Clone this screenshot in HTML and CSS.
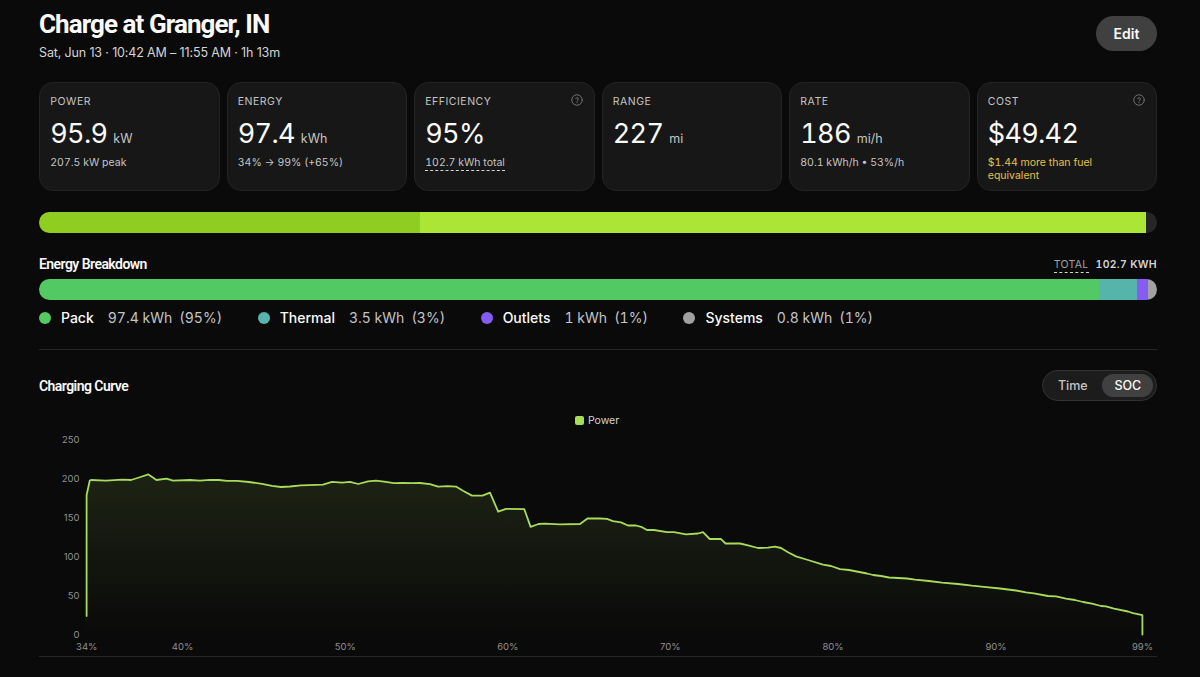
FILE: index.html
```html
<!DOCTYPE html>
<html lang="en">

<head>
    <meta charset="UTF-8">
    <meta name="viewport" content="width=device-width, initial-scale=1.0">
    <title>Charge at Granger, IN</title>
    <link rel="stylesheet" href="styles.css">
</head>

<body>
    <div class="page">
        <header class="header">
            <div>
                <h1>Charge at Granger, IN</h1>
                <p class="subtitle">Sat, Jun 13 · 10:42 AM – 11:55 AM · 1h 13m</p>
            </div>
            <button class="edit-button">Edit</button>
        </header>

        <!-- Stat cards -->
        <div class="cards">
            <div class="card">
                <div class="label">Power</div>
                <div class="value"><span>95.9</span><span class="unit">kW</span></div>
                <div class="note">207.5 kW peak</div>
            </div>
            <div class="card">
                <div class="label">Energy</div>
                <div class="value"><span>97.4</span><span class="unit">kWh</span></div>
                <div class="note">34% → 99% (+65%)</div>
            </div>
            <div class="card">
                <div class="label">Efficiency</div>
                <svg class="help" viewBox="0 0 24 24">
                    <circle cx="12" cy="12" r="10.5" />
                    <path d="M9.3 9.2a2.8 2.8 0 0 1 5.4 .9c0 1.8-2.7 2.3-2.7 3.9M12 17v.4" />
                </svg>
                <div class="value"><span>95%</span></div>
                <div class="note"><span class="dashed">102.7 kWh total</span></div>
            </div>
            <div class="card">
                <div class="label">Range</div>
                <div class="value"><span>227</span><span class="unit">mi</span></div>
            </div>
            <div class="card">
                <div class="label">Rate</div>
                <div class="value"><span>186</span><span class="unit">mi/h</span></div>
                <div class="note">80.1 kWh/h • 53%/h</div>
            </div>
            <div class="card">
                <div class="label">Cost</div>
                <svg class="help" viewBox="0 0 24 24">
                    <circle cx="12" cy="12" r="10.5" />
                    <path d="M9.3 9.2a2.8 2.8 0 0 1 5.4 .9c0 1.8-2.7 2.3-2.7 3.9M12 17v.4" />
                </svg>
                <div class="value"><span>$49.42</span></div>
                <div class="note warn">$1.44 more than fuel equivalent</div>
            </div>
        </div>

        <!-- State of charge, before and after -->
        <div class="bar soc-bar">
            <div class="soc-start" style="width: 34.1%"></div>
            <div class="soc-added" style="width: 64.9%"></div>
        </div>

        <section class="breakdown">
            <div class="section-head">
                <h2>Energy Breakdown</h2>
                <div class="total"><span class="total-label">Total</span><b>102.7 kWh</b></div>
            </div>
            <div class="bar">
                <div class="pack" style="width: 94.84%"></div>
                <div class="thermal" style="width: 3.41%"></div>
                <div class="outlets" style="width: 0.97%"></div>
                <div class="systems" style="width: 0.78%"></div>
            </div>
            <div class="legend">
                <div class="item"><i class="dot pack"></i><b>Pack</b><span>97.4 kWh</span><span>(95%)</span></div>
                <div class="item"><i class="dot thermal"></i><b>Thermal</b><span>3.5 kWh</span><span>(3%)</span></div>
                <div class="item"><i class="dot outlets"></i><b>Outlets</b><span>1 kWh</span><span>(1%)</span></div>
                <div class="item"><i class="dot systems"></i><b>Systems</b><span>0.8 kWh</span><span>(1%)</span></div>
            </div>
        </section>

        <section class="curve">
            <div class="curve-head">
                <h2>Charging Curve</h2>
                <div class="toggle">
                    <button>Time</button>
                    <button class="active">SOC</button>
                </div>
            </div>
            <div class="chart-legend"><i></i>Power</div>
            <svg class="chart" viewBox="39 430 1118 226">
                <defs>
                    <linearGradient id="fill" gradientUnits="userSpaceOnUse" x1="0" y1="474" x2="0" y2="635">
                        <stop offset="0" stop-color="#a8db59" stop-opacity="0.12" />
                        <stop offset="1" stop-color="#a8db59" stop-opacity="0" />
                    </linearGradient>
                </defs>
                <path id="area" fill="url(#fill)" />
                <polyline id="line" class="line" />
                <g class="y-axis">
                    <text x="79.5" y="442.6">250</text>
                    <text x="79.5" y="481.7">200</text>
                    <text x="79.5" y="520.7">150</text>
                    <text x="79.5" y="559.7">100</text>
                    <text x="79.5" y="598.8">50</text>
                    <text x="79.5" y="638">0</text>
                </g>
                <g class="x-axis">
                    <text x="86.7" y="650">34%</text>
                    <text x="182.5" y="650">40%</text>
                    <text x="345.3" y="650">50%</text>
                    <text x="507.8" y="650">60%</text>
                    <text x="670.4" y="650">70%</text>
                    <text x="833" y="650">80%</text>
                    <text x="996" y="650">90%</text>
                    <text x="1142.5" y="650">99%</text>
                </g>
            </svg>
        </section>
    </div>

    <script>
        // Power samples over the state of charge, in chart units
        const points = [
            [86.6, 616], [86.6, 495], [89.8, 480.5], [91, 480], [106, 480.6], [122, 479.7], [131, 480],
            [139, 477.5], [148.4, 474.4], [156.5, 480], [166.5, 478.6], [173, 480.6], [190, 480], [200, 480.6],
            [210, 479.9], [219, 480], [227, 480.9], [237, 480.8], [249, 482], [262, 483.8], [272, 485.8],
            [281, 487], [290, 486.5], [301, 485.4], [323, 484.7], [332, 481.9], [342, 482.7], [350, 481.8],
            [358.3, 484], [368, 481.4], [376, 480.7], [384, 481.7], [394, 483.2], [403, 482.8], [412, 483.2],
            [420, 483], [430, 484.2], [438, 486.7], [448, 486.2], [456, 486.6], [463, 490.8], [472, 495.6],
            [482.5, 495.6], [490, 492.6], [498.2, 511.7], [506, 508.8], [524.3, 509.2], [530.6, 526.9],
            [538.5, 524], [545, 523.6], [560, 524.3], [580, 524], [587.5, 518.5], [600, 518.5], [607, 518.9],
            [613, 521.2], [621, 522.4], [628, 525.5], [636, 525.5], [642, 527.2], [647, 530], [654, 530],
            [667, 532.2], [674, 532.2], [686, 534.3], [698, 533.5], [703, 532.1], [709.7, 539], [720.8, 538.8],
            [725.5, 543.5], [740, 543.5], [748, 545.3], [758, 548], [768, 547.7], [775, 546.6], [781, 548],
            [788, 552.3], [796, 556.4], [808, 560], [823, 564.7], [831, 566], [840, 569.2], [849, 570],
            [867, 573.5], [873, 575], [881, 576], [889, 577.5], [907, 578.5], [915, 579.6], [929, 581],
            [942, 582.6], [958, 584], [972, 585.7], [984, 586.8], [1000, 588.5], [1016, 590.5], [1026, 592.3],
            [1034, 593.3], [1048, 596], [1056, 596.3], [1066, 598.6], [1075, 600], [1083, 602], [1092, 603.7],
            [1101, 606], [1106, 606.3], [1114, 608.6], [1128, 611.5], [1133, 613.2], [1142.4, 615.2], [1142.4, 634.5]
        ];
        const path = points.map(p => p.join(",")).join(" ");
        document.getElementById("line").setAttribute("points", path);
        document.getElementById("area").setAttribute("d", "M86.6,634.5 L" + path + " Z");
    </script>
</body>

</html>
```
FILE: styles.css
```css
* {
    box-sizing: border-box;
}

body {
    margin: 0;
    background: #0a0a0a;
    color: #fafafa;
    font-family: Inter, sans-serif;
    height: 677px;
    overflow: hidden;
}

h1,
h2,
p {
    margin: 0;
}

h1,
h2 {
    font-family: Roboto, sans-serif;
}

button {
    font-family: inherit;
    border: none;
    color: #fafafa;
}

.page {
    width: 1118px;
    margin-left: 39px;
}

.header {
    display: flex;
    justify-content: space-between;
    align-items: flex-start;
    height: 82px;
}

h1 {
    margin-top: 8px;
    font-size: 26px;
    line-height: 32px;
    font-weight: 700;
    letter-spacing: -0.93px;
}

.subtitle {
    margin-top: 4px;
    font-size: 12.5px;
    line-height: 18px;
    letter-spacing: -0.14px;
    color: #d4d4d4;
}

.edit-button {
    margin-top: 16px;
    width: 61px;
    height: 35px;
    padding: 0;
    border-radius: 18px;
    background: #404040;
    font-size: 14px;
    font-weight: 600;
}

.cards {
    display: grid;
    grid-template-columns: repeat(6, 1fr);
    gap: 7px;
}

.card {
    position: relative;
    height: 108.5px;
    padding: 12px 10.3px;
    border: 1px solid #232323;
    border-radius: 14px;
    background: #171717;
    font-variant-numeric: tabular-nums;
}

.label {
    font-size: 10.5px;
    line-height: 14px;
    letter-spacing: 0.5px;
    text-transform: uppercase;
    color: #c4c4c4;
}

.value {
    display: flex;
    align-items: baseline;
    gap: 6px;
    height: 34px;
    margin-top: 8px;
    font-size: 27px;
    line-height: 34px;
    letter-spacing: -0.7px;
    white-space: nowrap;
}

.unit {
    font-size: 12.5px;
    line-height: 16px;
    letter-spacing: 0;
    color: #c4c4c4;
}

.note {
    margin-top: 5px;
    font-size: 10.5px;
    line-height: 13px;
    letter-spacing: 0;
    color: #c4c4c4;
}

.warn {
    padding-right: 20px;
    color: #e5c049;
}

.dashed {
    display: inline-block;
    padding-bottom: 1px;
    border-bottom: 1px dashed #d4d4d4;
}

.help {
    position: absolute;
    top: 11px;
    right: 11px;
    width: 12px;
    height: 12px;
    fill: none;
    stroke: #737373;
    stroke-width: 1.9;
    stroke-linecap: round;
}

.bar {
    display: flex;
    height: 21px;
    border-radius: 11px;
    overflow: hidden;
}

.soc-bar {
    margin-top: 21px;
    background: #262626;
}

.soc-start {
    background: #8fce21;
}

.soc-added {
    background: #abe536;
}

.pack {
    background: #52c963;
}

.thermal {
    background: #55b5aa;
}

.outlets {
    background: #855cf2;
}

.systems {
    background: #a1a1a1;
}

.breakdown {
    height: 117px;
    border-bottom: 1px solid #262626;
}

.section-head {
    display: flex;
    justify-content: space-between;
    height: 46.5px;
    padding-top: 22px;
}

h2 {
    font-size: 14px;
    line-height: 18px;
    font-weight: 600;
    letter-spacing: -0.55px;
}

.total {
    margin-top: 3px;
    font-size: 10.5px;
    line-height: 14px;
    letter-spacing: 0.3px;
    text-transform: uppercase;
    font-variant-numeric: tabular-nums;
    color: #d4d4d4;
}

.total-label {
    display: inline-block;
    margin-right: 7px;
    color: #a1a1a1;
    border-bottom: 1px dashed #d4d4d4;
}

.total b {
    font-weight: 600;
}

.legend {
    display: flex;
    gap: 35.5px;
    margin-top: 8px;
    font-size: 14px;
    line-height: 20px;
    letter-spacing: 0;
    font-variant-numeric: tabular-nums;
    color: #c4c4c4;
}

.item {
    display: flex;
    align-items: center;
    gap: 7px;
}

.item b {
    margin-right: 7px;
    font-weight: 500;
    color: #fafafa;
}

.dot {
    width: 12px;
    height: 12px;
    margin-right: 3px;
    border-radius: 50%;
}

.curve {
    height: 307px;
    padding-top: 20px;
    border-bottom: 1px solid #262626;
}

.curve-head {
    display: flex;
    justify-content: space-between;
    align-items: center;
    height: 32px;
}

.toggle {
    display: flex;
    width: 115px;
    height: 31px;
    margin-bottom: 1px;
    padding: 3px;
    border: 1px solid #333;
    border-radius: 16px;
    background: #1c1c1c;
}

.toggle button {
    width: 57px;
    padding: 0 3px 0 0;
    border-radius: 12px;
    background: none;
    font-size: 12.5px;
    font-weight: 500;
    letter-spacing: -0.1px;
    color: #c4c4c4;
}

.toggle .active {
    width: 51px;
    padding: 0;
    background: #404040;
    color: #fafafa;
}

.chart-legend {
    display: flex;
    justify-content: center;
    align-items: center;
    gap: 4px;
    height: 28px;
    padding: 9px 2px 0 0;
    font-size: 10.5px;
    color: #d4d4d4;
}

.chart-legend i {
    width: 9px;
    height: 9px;
    border-radius: 2px;
    background: #a8db59;
}

.chart {
    display: block;
    width: 1118px;
    height: 226px;
}

.line {
    fill: none;
    stroke: #a8db59;
    stroke-width: 1.8;
    stroke-linejoin: round;
    stroke-linecap: round;
}

.y-axis,
.x-axis {
    font-size: 9.5px;
    fill: #909090;
}

.y-axis {
    text-anchor: end;
}

.x-axis {
    text-anchor: middle;
}
```
